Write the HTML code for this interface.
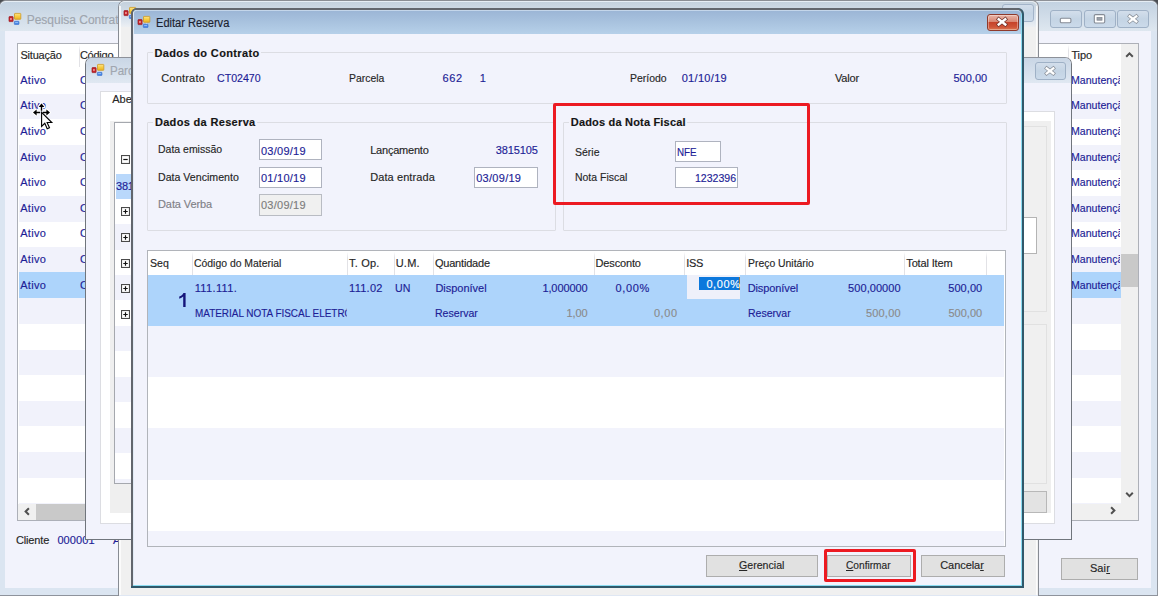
<!DOCTYPE html>
<html>
<head>
<meta charset="utf-8">
<title>Editar Reserva</title>
<style>
html,body{margin:0;padding:0;}
body{width:1158px;height:596px;overflow:hidden;position:relative;background:#4a4d52;font-family:"Liberation Sans",sans-serif;font-size:11px;}
.L{position:absolute;left:0;top:0;width:1158px;height:596px;overflow:hidden;}
.L div,.L svg,.L span{position:absolute;box-sizing:border-box;}
.t{white-space:nowrap;font-family:"Liberation Sans",sans-serif;-webkit-text-stroke:0.15px currentColor;}
.t u{position:static;text-decoration:underline;text-underline-offset:1px;}
.btn{background:#e1e1e1;border:1px solid #adadad;}
.inp{background:#fff;border:1px solid #afb3bf;}
.gb{border:1px solid #dcdde3;border-radius:1px;}
.sep{width:1px;background:linear-gradient(#fff,#e2e2e6 25%,#e2e2e6 100%);}
</style>
</head>
<body>

<!-- ======================= BACK WINDOW : Pesquisa Contrato ======================= -->
<div class="L" id="w-back">
  <div style="left:-1px;top:0;width:1159px;height:597px;background:#dbe5f1;border:1px solid #92979f;border-top:1.4px solid #8e9197;border-radius:7px 7px 0 0;"></div>
  <div style="left:0;top:1.4px;width:1157px;height:29.6px;background:linear-gradient(#c3d2e1,#dee7f0);border-radius:6px 6px 0 0;border-top:1px solid #e6edf4;"></div>
  <div style="left:5px;top:31px;width:1146px;height:557px;background:#f2f3fc;"></div>
  <div style="left:0;top:594.8px;width:1158px;height:1.2px;background:#8e939c;"></div>
  <svg style="left:8px;top:12px" width="16" height="16" viewBox="0 0 16 16"><use href="#appicon"/></svg>
  <!-- caption buttons -->
  <div style="left:1050px;top:10px;width:32px;height:18px;border:1px solid #9fb1c6;border-radius:3px;background:linear-gradient(#d3deeb,#c4d4e4 50%,#cbdaea);"></div>
  <div style="left:1084px;top:10px;width:32px;height:18px;border:1px solid #9fb1c6;border-radius:3px;background:linear-gradient(#d3deeb,#c4d4e4 50%,#cbdaea);"></div>
  <div style="left:1117px;top:10px;width:32px;height:18px;border:1px solid #9fb1c6;border-radius:3px;background:linear-gradient(#d3deeb,#c4d4e4 50%,#cbdaea);"></div>
  <svg style="left:1058px;top:16px" width="16" height="9" viewBox="0 0 16 9"><rect x="2.3" y="2.2" width="10.6" height="4.6" rx="1.2" fill="#fff" stroke="#858b95" stroke-width="1.1"/></svg>
  <svg style="left:1092px;top:13px" width="16" height="12" viewBox="0 0 16 12"><rect x="2.3" y="1.6" width="10.4" height="8.4" rx="1.2" fill="#fff" stroke="#858b95" stroke-width="1.1"/><rect x="5" y="4.4" width="5" height="2.8" fill="#9aa0a8" stroke="#858b95" stroke-width=".8"/></svg>
  <svg style="left:1125px;top:13px" width="16" height="12" viewBox="0 0 16 12"><use href="#xglyph"/></svg>

  <!-- grid -->
  <div style="left:17px;top:43px;width:1122px;height:478px;background:#fff;border:1px solid #adb0b8;"></div>
  <div style="left:19px;top:67.5px;width:1102px;height:436px;background:repeating-linear-gradient(to bottom,#fff 0,#fff 25.6px,#f1f2fb 25.6px,#f1f2fb 51.2px);"></div>
  <div style="left:19px;top:272.4px;width:1102px;height:25.6px;background:#add4fb;"></div>
  <div class="sep" style="left:78.5px;top:45px;height:22px;"></div>
  <div class="sep" style="left:1068px;top:45px;height:22px;"></div>
  <!-- v scrollbar -->
  <div style="left:1121px;top:44px;width:17px;height:460px;background:#f0f0f0;"></div>
  <div style="left:1121px;top:253.5px;width:17px;height:33px;background:#c9c9c9;"></div>
  <svg style="left:1124px;top:51.2px" width="11" height="8" viewBox="0 0 11 8"><path d="M2.2 5.7 L5.5 2.4 L8.8 5.7" fill="none" stroke="#505050" stroke-width="2"/></svg>
  <svg style="left:1123.6px;top:491px" width="11" height="8" viewBox="0 0 11 8"><path d="M2.2 1.8 L5.5 5.1 L8.8 1.8" fill="none" stroke="#505050" stroke-width="2"/></svg>
  <!-- h scrollbar -->
  <div style="left:18px;top:503.5px;width:1120px;height:16.5px;background:#f0f0f0;"></div>
  <div style="left:35.5px;top:503.5px;width:400px;height:16.5px;background:#c9c9c9;"></div>
  <svg style="left:23.1px;top:505.5px" width="8" height="11" viewBox="0 0 8 11"><path d="M5.9 2.2 L2.6 5.5 L5.9 8.8" fill="none" stroke="#505050" stroke-width="2"/></svg>
  <svg style="left:1108.5px;top:505.2px" width="8" height="11" viewBox="0 0 8 11"><path d="M2.1 2.2 L5.4 5.5 L2.1 8.8" fill="none" stroke="#505050" stroke-width="2"/></svg>
  <!-- Sair button -->
  <div class="btn" style="left:1061px;top:558px;width:77px;height:21.5px;"></div>
<span class="t" style="left:26.74px;top:13.84px;font-size:12px;line-height:12px;color:#9ea5ae;letter-spacing:-0.020px;">Pesquisa Contrato</span>
<span class="t" style="left:20.39px;top:50.49px;font-size:11px;line-height:11px;color:#262626;letter-spacing:-0.186px;">Situação</span>
<span class="t" style="left:79.89px;top:50.49px;font-size:11px;line-height:11px;color:#262626;letter-spacing:-0.230px;">Código</span>
<span class="t" style="left:1071.39px;top:50.49px;font-size:11px;line-height:11px;color:#262626;letter-spacing:-0.097px;">Tipo</span>
<span class="t" style="left:20.20px;top:74.71px;font-size:11px;line-height:11px;color:#1d1d96;letter-spacing:0.285px;">Ativo</span>
<span class="t" style="left:79.99px;top:74.71px;font-size:11px;line-height:11px;color:#1d1d96;">C</span>
<span class="t" style="left:1070.80px;top:74.71px;font-size:11px;line-height:11px;color:#1d1d96;transform:scaleX(0.9631);transform-origin:0 0;width:51.30px;height:14px;overflow:hidden;">Manutenção</span>
<span class="t" style="left:20.20px;top:100.31px;font-size:11px;line-height:11px;color:#1d1d96;letter-spacing:0.285px;">Ativo</span>
<span class="t" style="left:79.99px;top:100.31px;font-size:11px;line-height:11px;color:#1d1d96;">C</span>
<span class="t" style="left:1070.80px;top:100.31px;font-size:11px;line-height:11px;color:#1d1d96;transform:scaleX(0.9631);transform-origin:0 0;width:51.30px;height:14px;overflow:hidden;">Manutenção</span>
<span class="t" style="left:20.20px;top:125.91px;font-size:11px;line-height:11px;color:#1d1d96;letter-spacing:0.285px;">Ativo</span>
<span class="t" style="left:79.99px;top:125.91px;font-size:11px;line-height:11px;color:#1d1d96;">C</span>
<span class="t" style="left:1070.80px;top:125.91px;font-size:11px;line-height:11px;color:#1d1d96;transform:scaleX(0.9631);transform-origin:0 0;width:51.30px;height:14px;overflow:hidden;">Manutenção</span>
<span class="t" style="left:20.20px;top:151.51px;font-size:11px;line-height:11px;color:#1d1d96;letter-spacing:0.285px;">Ativo</span>
<span class="t" style="left:79.99px;top:151.51px;font-size:11px;line-height:11px;color:#1d1d96;">C</span>
<span class="t" style="left:1070.80px;top:151.51px;font-size:11px;line-height:11px;color:#1d1d96;transform:scaleX(0.9631);transform-origin:0 0;width:51.30px;height:14px;overflow:hidden;">Manutenção</span>
<span class="t" style="left:20.20px;top:177.11px;font-size:11px;line-height:11px;color:#1d1d96;letter-spacing:0.285px;">Ativo</span>
<span class="t" style="left:79.99px;top:177.11px;font-size:11px;line-height:11px;color:#1d1d96;">C</span>
<span class="t" style="left:1070.80px;top:177.11px;font-size:11px;line-height:11px;color:#1d1d96;transform:scaleX(0.9631);transform-origin:0 0;width:51.30px;height:14px;overflow:hidden;">Manutenção</span>
<span class="t" style="left:20.20px;top:202.71px;font-size:11px;line-height:11px;color:#1d1d96;letter-spacing:0.285px;">Ativo</span>
<span class="t" style="left:79.99px;top:202.71px;font-size:11px;line-height:11px;color:#1d1d96;">C</span>
<span class="t" style="left:1070.80px;top:202.71px;font-size:11px;line-height:11px;color:#1d1d96;transform:scaleX(0.9631);transform-origin:0 0;width:51.30px;height:14px;overflow:hidden;">Manutenção</span>
<span class="t" style="left:20.20px;top:228.31px;font-size:11px;line-height:11px;color:#1d1d96;letter-spacing:0.285px;">Ativo</span>
<span class="t" style="left:79.99px;top:228.31px;font-size:11px;line-height:11px;color:#1d1d96;">C</span>
<span class="t" style="left:1070.80px;top:228.31px;font-size:11px;line-height:11px;color:#1d1d96;transform:scaleX(0.9631);transform-origin:0 0;width:51.30px;height:14px;overflow:hidden;">Manutenção</span>
<span class="t" style="left:20.20px;top:253.91px;font-size:11px;line-height:11px;color:#1d1d96;letter-spacing:0.285px;">Ativo</span>
<span class="t" style="left:79.99px;top:253.91px;font-size:11px;line-height:11px;color:#1d1d96;">C</span>
<span class="t" style="left:1070.80px;top:253.91px;font-size:11px;line-height:11px;color:#1d1d96;transform:scaleX(0.9631);transform-origin:0 0;width:51.30px;height:14px;overflow:hidden;">Manutenção</span>
<span class="t" style="left:20.20px;top:279.51px;font-size:11px;line-height:11px;color:#1d1d96;letter-spacing:0.285px;">Ativo</span>
<span class="t" style="left:79.99px;top:279.51px;font-size:11px;line-height:11px;color:#1d1d96;">C</span>
<span class="t" style="left:1070.80px;top:279.51px;font-size:11px;line-height:11px;color:#1d1d96;transform:scaleX(0.9631);transform-origin:0 0;width:51.30px;height:14px;overflow:hidden;">Manutenção</span>
<span class="t" style="left:15.89px;top:534.69px;font-size:11px;line-height:11px;color:#262626;letter-spacing:-0.140px;">Cliente</span>
<span class="t" style="left:57.40px;top:534.69px;font-size:11px;line-height:11px;color:#1d1d96;letter-spacing:0.098px;">000001</span>
<span class="t" style="left:112.99px;top:534.69px;font-size:11px;line-height:11px;color:#1d1d96;">A</span>
<span class="t" style="left:1089.89px;top:563.29px;font-size:11px;line-height:11px;color:#262626;letter-spacing:0.144px;">Sai<u>r</u></span>
  <div style="left:1120.5px;top:68px;width:1px;height:435px;background:transparent;"></div>
</div>

<!-- ======================= MIDDLE WINDOW ======================= -->
<div class="L" id="w-mid">
  <div style="left:118px;top:0;width:920.6px;height:600px;background:#f0f0f0;border:1.3px solid #878b93;border-top:1.4px solid #8a8d93;border-radius:7px 7px 0 0;"></div>
  <div style="left:119.3px;top:1.4px;width:918px;height:25.6px;background:linear-gradient(#c4d1dd,#dbe4ee 70%,#eceff3);border-radius:6px 6px 0 0;border-top:1px solid #e6edf4;"></div>
  <div style="left:119.3px;top:6px;width:1.3px;height:594px;background:rgba(255,255,255,.75);"></div>
  <div style="left:1035.6px;top:6px;width:1.6px;height:594px;background:rgba(255,255,255,.8);"></div>
  <div style="left:119px;top:594.5px;width:919px;height:2px;background:#dfe7f3;"></div>
  <svg style="left:123px;top:5.8px" width="16" height="16" viewBox="0 0 16 16"><use href="#appicon"/></svg>
  <div style="left:1002px;top:3.5px;width:32px;height:18px;border:1px solid #a3b4c9;border-radius:3px;background:linear-gradient(#d3deeb,#c6d5e5 50%,#cddbea);"></div>

</div>

<!-- ======================= PARCELAS WINDOW ======================= -->
<div class="L" id="w-parc">
  <div style="left:85px;top:57px;width:986.5px;height:483px;background:#f2f3fc;border:1px solid #70757c;border-top-color:#8d9199;border-radius:7px 7px 0 0;"></div>
  <div style="left:86px;top:58px;width:984.5px;height:25px;background:linear-gradient(#c9d6e5,#e0e8f2);border-radius:6px 6px 0 0;"></div>
  <svg style="left:91.3px;top:63.2px" width="16" height="16" viewBox="0 0 16 16"><use href="#appicon"/></svg>
  <div style="left:1035px;top:62px;width:31px;height:18px;border:1px solid #9fb1c6;border-radius:3px;background:linear-gradient(#d3deeb,#c4d4e4 50%,#cbdaea);"></div>
  <svg style="left:1042.4px;top:65px" width="16" height="12" viewBox="0 0 16 12"><use href="#xglyph"/></svg>
  <!-- tab control -->
  <div style="left:100px;top:91px;width:72px;height:22px;background:#fff;border:1px solid #dcdde2;border-bottom:none;"></div>
  <div style="left:100px;top:111px;width:954.5px;height:413px;background:#fff;border:1px solid #dcdde2;"></div>
  <div style="left:101px;top:110px;width:70px;height:3px;background:#fff;"></div>
  <!-- gray panel -->
  <div style="left:110px;top:120.5px;width:941px;height:392.5px;background:#efefef;"></div>
  <div style="left:600px;top:126px;width:447px;height:186px;border:1px solid #e1e1e1;background:#f0f0f0;"></div>
  <div style="left:600px;top:324px;width:447px;height:160px;border:1px solid #e1e1e1;background:#f0f0f0;"></div>
  <div style="left:900px;top:217px;width:136.5px;height:37px;border:1px solid #b4b4b4;background:#fff;"></div>
  <div class="btn" style="left:960px;top:491px;width:87px;height:22px;background:#e3e3e3;border-color:#b8b8b8;"></div>
  <!-- left list -->
  <div style="left:114px;top:122px;width:400px;height:361.5px;background:#fff;border:1px solid #a5a8ae;"></div>
  <div style="left:115px;top:147.5px;width:398px;height:335px;background:repeating-linear-gradient(to bottom,#fff 0,#fff 25.5px,#fff 25.5px,#fff 76.5px,#f1f2fb 76.5px,#f1f2fb 102px,#fff 102px,#fff 127.5px);"></div>
  <div style="left:115px;top:224px;width:398px;height:259px;background:repeating-linear-gradient(to bottom,#f1f2fb 0,#f1f2fb 25.5px,#fff 25.5px,#fff 51px);"></div>
  <div style="left:116px;top:173.6px;width:397px;height:25px;background:#b9d8fb;"></div>
  <svg style="left:121px;top:155px" width="9" height="9" viewBox="0 0 9 9"><rect x=".5" y=".5" width="8" height="8" fill="#fff" stroke="#4a4a4a" stroke-width="1.15"/><path d="M2.3 4.5h4.4" stroke="#111" stroke-width="1.2"/></svg>
  <svg style="left:121px;top:206.5px" width="9" height="9" viewBox="0 0 9 9"><use href="#plusbox"/></svg>
  <svg style="left:121px;top:232.5px" width="9" height="9" viewBox="0 0 9 9"><use href="#plusbox"/></svg>
  <svg style="left:121px;top:258.5px" width="9" height="9" viewBox="0 0 9 9"><use href="#plusbox"/></svg>
  <svg style="left:121px;top:284.2px" width="9" height="9" viewBox="0 0 9 9"><use href="#plusbox"/></svg>
  <svg style="left:121px;top:310.2px" width="9" height="9" viewBox="0 0 9 9"><use href="#plusbox"/></svg>
<span class="t" style="left:110.24px;top:65.24px;font-size:12px;line-height:12px;color:#a0a6af;transform:scaleX(0.9621);transform-origin:0 0;">Parcelas</span>
<span class="t" style="left:112.19px;top:94.49px;font-size:11px;line-height:11px;color:#262626;letter-spacing:0.081px;">Abertas</span>
<span class="t" style="left:116.09px;top:180.89px;font-size:11px;line-height:11px;color:#1d1d96;letter-spacing:-0.275px;">381</span>
</div>

<!-- ======================= FRONT WINDOW : Editar Reserva ======================= -->
<div class="L" id="w-front">
  <!-- frame -->
  <div style="left:131px;top:8px;width:893px;height:580.4px;background:#31586a;border-radius:6px 6px 0 0;"></div>
  <div style="left:131px;top:7.8px;width:891.2px;height:578.6px;background:#62666d;border-radius:6px 5px 0 0;"></div>
  <div style="left:133px;top:9.6px;width:889.2px;height:576.8px;background:#8bdcf1;border-radius:4px 5px 0 0;"></div>
  <div style="left:133px;top:9.6px;width:888px;height:575.5px;background:#f2f3fc;border-left:1.2px solid #e1eaf5;border-radius:4px 5px 0 0;"></div>
  <div style="left:134px;top:10px;width:887px;height:24px;background:linear-gradient(#9cb6d6,#a9c3df 50%,#b6d0e9);border-radius:3px 4px 0 0;border-top:1px solid #c4d6ea;"></div>
  <svg style="left:137.4px;top:15.3px" width="16" height="16" viewBox="0 0 16 16"><use href="#appicon"/></svg>
  <!-- red close -->
  <div style="left:987px;top:13.5px;width:32px;height:17.5px;border:1px solid #8f3a2c;border-radius:3px;background:linear-gradient(#e8b5a8 0,#d98672 45%,#c6432a 50%,#cf5438 80%,#dc7a52 100%);box-shadow:inset 0 0 0 1px rgba(255,255,255,.35);"></div>
  <svg style="left:994.3px;top:15.6px" width="16" height="12" viewBox="0 0 16 12"><path d="M4.7 3.3 L11.3 8.5 M11.3 3.3 L4.7 8.5" stroke="#70342c" stroke-width="3.9" stroke-linecap="square" fill="none"/><path d="M4.7 3.3 L11.3 8.5 M11.3 3.3 L4.7 8.5" stroke="#fff" stroke-width="2.4" stroke-linecap="square" fill="none"/></svg>

  <!-- group boxes -->
  <div class="gb" style="left:147px;top:52px;width:860px;height:51.5px;"></div>
  <div style="left:153px;top:46px;width:108px;height:14px;background:#f2f3fc;"></div>
  <div class="gb" style="left:147px;top:121.5px;width:409px;height:109px;"></div>
  <div style="left:153px;top:115px;width:104px;height:14px;background:#f2f3fc;"></div>
  <div class="gb" style="left:562.5px;top:121.5px;width:444.5px;height:109px;"></div>
  <div style="left:569px;top:115px;width:118px;height:14px;background:#f2f3fc;"></div>

  <!-- inputs -->
  <div class="inp" style="left:259px;top:139px;width:63px;height:21px;"></div>
  <div class="inp" style="left:259px;top:167px;width:63px;height:21px;"></div>
  <div class="inp" style="left:259px;top:194px;width:63px;height:22px;background:#f0f0f0;border-color:#b9bcc3;"></div>
  <div class="inp" style="left:474px;top:167px;width:64px;height:21px;"></div>
  <div class="inp" style="left:675px;top:141px;width:46px;height:21px;"></div>
  <div class="inp" style="left:675px;top:167px;width:63px;height:21px;"></div>

  <!-- red highlight rectangles -->
  <div style="left:553px;top:103px;width:256.5px;height:101.5px;border:3px solid #ec1a22;border-radius:2px;"></div>
  <div style="left:823.5px;top:549px;width:92.5px;height:32.5px;border:3px solid #ec1a22;border-radius:2px;"></div>

  <!-- grid -->
  <div style="left:146.5px;top:249.6px;width:859.7px;height:297.7px;background:#fff;border:1px solid #b1b4ba;"></div>
  <div style="left:147.5px;top:326.2px;width:856px;height:220.3px;background:repeating-linear-gradient(to bottom,#f2f3fc 0,#f2f3fc 51.2px,#fff 51.2px,#fff 102.4px);"></div>
  <div style="left:147.5px;top:275.1px;width:856px;height:51.1px;background:#add4fb;"></div>
  <div class="sep" style="left:192px;top:252px;height:23px;"></div>
  <div class="sep" style="left:346.8px;top:252px;height:23px;"></div>
  <div class="sep" style="left:393.6px;top:252px;height:23px;"></div>
  <div class="sep" style="left:433px;top:252px;height:23px;"></div>
  <div class="sep" style="left:593.6px;top:252px;height:23px;"></div>
  <div class="sep" style="left:684.4px;top:252px;height:23px;"></div>
  <div class="sep" style="left:745.4px;top:252px;height:23px;"></div>
  <div class="sep" style="left:903.8px;top:252px;height:23px;"></div>
  <div class="sep" style="left:986.4px;top:252px;height:23px;"></div>
  <!-- ISS editing cell -->
  <div style="left:686.6px;top:275px;width:53.6px;height:23.5px;background:#eef0fa;"></div>
  <div style="left:698.6px;top:277.4px;width:40.6px;height:12.4px;background:#0c78dc;"></div>
  <div style="left:739.2px;top:277.4px;width:1px;height:12.4px;background:#8a7a50;"></div>

  <!-- buttons -->
  <div class="btn" style="left:706px;top:555px;width:112px;height:21.5px;"></div>
  <div class="btn" style="left:827px;top:555px;width:84px;height:21.5px;"></div>
  <div class="btn" style="left:921px;top:555px;width:84px;height:21.5px;"></div>
  <svg style="left:176px;top:290px" width="14" height="20" viewBox="176 290 14 20"><path d="M183.45 292.9h2.15v14.1h-2.4v-10.5c-1 .95-2.35 1.7-3.95 2.2v-2.2c1.95-.75 3.35-1.95 4.2-3.6z" fill="#15157a"/></svg>
<span class="t" style="left:155.94px;top:16.84px;font-size:12px;line-height:12px;color:#1b2230;transform:scaleX(0.9237);transform-origin:0 0;">Editar Reserva</span>
<span class="t" style="left:154.40px;top:47.69px;font-size:11px;line-height:11px;color:#151515;letter-spacing:0.363px;font-weight:bold;">Dados do Contrato</span>
<span class="t" style="left:161.20px;top:73.29px;font-size:11px;line-height:11px;color:#262626;letter-spacing:0.201px;">Contrato</span>
<span class="t" style="left:217.40px;top:73.29px;font-size:11px;line-height:11px;color:#1d1d96;transform:scaleX(0.9634);transform-origin:0 0;">CT02470</span>
<span class="t" style="left:348.79px;top:73.29px;font-size:11px;line-height:11px;color:#262626;transform:scaleX(0.9494);transform-origin:0 0;">Parcela</span>
<span class="t" style="left:442.59px;top:73.29px;font-size:11px;line-height:11px;color:#1d1d96;letter-spacing:0.625px;">662</span>
<span class="t" style="left:479.69px;top:73.29px;font-size:11px;line-height:11px;color:#1d1d96;">1</span>
<span class="t" style="left:630.19px;top:73.29px;font-size:11px;line-height:11px;color:#262626;transform:scaleX(0.9501);transform-origin:0 0;">Período</span>
<span class="t" style="left:681.69px;top:73.29px;font-size:11px;line-height:11px;color:#1d1d96;letter-spacing:0.312px;">01/10/19</span>
<span class="t" style="left:835.00px;top:73.29px;font-size:11px;line-height:11px;color:#262626;letter-spacing:-0.166px;">Valor</span>
<span class="t" style="left:953.39px;top:73.29px;font-size:11px;line-height:11px;color:#1d1d96;letter-spacing:0.031px;">500,00</span>
<span class="t" style="left:154.90px;top:116.69px;font-size:11px;line-height:11px;color:#151515;letter-spacing:0.328px;font-weight:bold;">Dados da Reserva</span>
<span class="t" style="left:158.00px;top:144.49px;font-size:11px;line-height:11px;color:#262626;transform:scaleX(0.9531);transform-origin:0 0;">Data emissão</span>
<span class="t" style="left:158.00px;top:171.89px;font-size:11px;line-height:11px;color:#262626;transform:scaleX(0.9645);transform-origin:0 0;">Data Vencimento</span>
<span class="t" style="left:158.00px;top:199.49px;font-size:11px;line-height:11px;color:#808087;letter-spacing:-0.093px;">Data Verba</span>
<span class="t" style="left:261.00px;top:145.69px;font-size:11px;line-height:11px;color:#1d1d96;letter-spacing:0.255px;">03/09/19</span>
<span class="t" style="left:261.00px;top:173.29px;font-size:11px;line-height:11px;color:#1d1d96;letter-spacing:0.255px;">01/10/19</span>
<span class="t" style="left:261.00px;top:200.49px;font-size:11px;line-height:11px;color:#7d7d7d;letter-spacing:0.255px;">03/09/19</span>
<span class="t" style="left:370.19px;top:144.69px;font-size:11px;line-height:11px;color:#262626;letter-spacing:-0.215px;">Lançamento</span>
<span class="t" style="left:495.79px;top:144.69px;font-size:11px;line-height:11px;color:#1d1d96;letter-spacing:-0.120px;">3815105</span>
<span class="t" style="left:370.19px;top:171.89px;font-size:11px;line-height:11px;color:#262626;letter-spacing:0.091px;">Data entrada</span>
<span class="t" style="left:476.19px;top:173.29px;font-size:11px;line-height:11px;color:#1d1d96;letter-spacing:0.283px;">03/09/19</span>
<span class="t" style="left:570.79px;top:116.69px;font-size:11px;line-height:11px;color:#151515;letter-spacing:0.187px;font-weight:bold;">Dados da Nota Fiscal</span>
<span class="t" style="left:575.29px;top:147.09px;font-size:11px;line-height:11px;color:#262626;transform:scaleX(0.9542);transform-origin:0 0;">Série</span>
<span class="t" style="left:677.00px;top:147.19px;font-size:11px;line-height:11px;color:#1d1d96;transform:scaleX(0.8914);transform-origin:0 0;">NFE</span>
<span class="t" style="left:575.29px;top:172.09px;font-size:11px;line-height:11px;color:#262626;transform:scaleX(0.9506);transform-origin:0 0;">Nota Fiscal</span>
<span class="t" style="left:695.00px;top:173.29px;font-size:11px;line-height:11px;color:#1d1d96;transform:scaleX(0.9599);transform-origin:0 0;">1232396</span>
<span class="t" style="left:150.09px;top:257.89px;font-size:11px;line-height:11px;color:#262626;transform:scaleX(0.9608);transform-origin:0 0;">Seq</span>
<span class="t" style="left:194.20px;top:257.89px;font-size:11px;line-height:11px;color:#262626;transform:scaleX(0.9466);transform-origin:0 0;">Código do Material</span>
<span class="t" style="left:349.09px;top:257.89px;font-size:11px;line-height:11px;color:#262626;letter-spacing:0.173px;">T. Op.</span>
<span class="t" style="left:395.69px;top:257.89px;font-size:11px;line-height:11px;color:#262626;letter-spacing:0.225px;">U.M.</span>
<span class="t" style="left:434.89px;top:257.89px;font-size:11px;line-height:11px;color:#262626;letter-spacing:-0.187px;">Quantidade</span>
<span class="t" style="left:595.60px;top:257.89px;font-size:11px;line-height:11px;color:#262626;letter-spacing:-0.168px;">Desconto</span>
<span class="t" style="left:686.19px;top:257.89px;font-size:11px;line-height:11px;color:#262626;letter-spacing:-0.262px;">ISS</span>
<span class="t" style="left:747.69px;top:257.89px;font-size:11px;line-height:11px;color:#262626;transform:scaleX(0.9456);transform-origin:0 0;">Preço Unitário</span>
<span class="t" style="left:906.29px;top:257.89px;font-size:11px;line-height:11px;color:#262626;letter-spacing:-0.153px;">Total Item</span>
<span class="t" style="left:194.70px;top:282.59px;font-size:11px;line-height:11px;color:#1d1d96;letter-spacing:0.364px;">111.111.</span>
<span class="t" style="left:349.09px;top:282.59px;font-size:11px;line-height:11px;color:#1d1d96;letter-spacing:0.259px;">111.02</span>
<span class="t" style="left:394.89px;top:282.59px;font-size:11px;line-height:11px;color:#1d1d96;transform:scaleX(0.9635);transform-origin:0 0;">UN</span>
<span class="t" style="left:435.39px;top:282.59px;font-size:11px;line-height:11px;color:#1d1d96;letter-spacing:-0.017px;">Disponível</span>
<span class="t" style="left:542.39px;top:282.59px;font-size:11px;line-height:11px;color:#1d1d96;letter-spacing:-0.097px;">1,000000</span>
<span class="t" style="left:615.39px;top:282.59px;font-size:11px;line-height:11px;color:#1d1d96;letter-spacing:0.702px;">0,00%</span>
<span class="t" style="left:706.39px;top:279.09px;font-size:11px;line-height:11px;color:#ffffff;letter-spacing:0.602px;">0,00%</span>
<span class="t" style="left:747.69px;top:282.59px;font-size:11px;line-height:11px;color:#1d1d96;letter-spacing:-0.105px;">Disponível</span>
<span class="t" style="left:848.10px;top:282.59px;font-size:11px;line-height:11px;color:#1d1d96;letter-spacing:0.064px;">500,00000</span>
<span class="t" style="left:948.19px;top:282.59px;font-size:11px;line-height:11px;color:#1d1d96;letter-spacing:0.071px;">500,00</span>
<span class="t" style="left:435.39px;top:308.39px;font-size:11px;line-height:11px;color:#1d1d96;transform:scaleX(0.9593);transform-origin:0 0;">Reservar</span>
<span class="t" style="left:566.39px;top:308.39px;font-size:11px;line-height:11px;color:#8b8b8b;letter-spacing:-0.071px;">1,00</span>
<span class="t" style="left:653.89px;top:308.39px;font-size:11px;line-height:11px;color:#8b8b8b;letter-spacing:0.596px;">0,00</span>
<span class="t" style="left:747.69px;top:308.39px;font-size:11px;line-height:11px;color:#1d1d96;transform:scaleX(0.9571);transform-origin:0 0;">Reservar</span>
<span class="t" style="left:865.89px;top:308.39px;font-size:11px;line-height:11px;color:#8b8b8b;letter-spacing:0.211px;">500,00</span>
<span class="t" style="left:948.39px;top:308.39px;font-size:11px;line-height:11px;color:#8b8b8b;letter-spacing:0.031px;">500,00</span>
<span class="t" style="left:739.39px;top:560.29px;font-size:11px;line-height:11px;color:#262626;transform:scaleX(0.9642);transform-origin:0 0;"><u>G</u>erencial</span>
<span class="t" style="left:845.60px;top:560.29px;font-size:11px;line-height:11px;color:#262626;transform:scaleX(0.9237);transform-origin:0 0;"><u>C</u>onfirmar</span>
<span class="t" style="left:940.19px;top:560.29px;font-size:11px;line-height:11px;color:#262626;letter-spacing:-0.060px;">Cancela<u>r</u></span>
<span class="t" style="left:194.60px;top:308.39px;font-size:11px;line-height:11px;height:13px;color:#1d1d96;transform:scaleX(0.9031);transform-origin:0 0;width:168.0px;overflow:hidden;">MATERIAL NOTA FISCAL ELETRÔNICA</span>
</div>

<!-- mouse cursor -->
<svg style="position:absolute;left:30px;top:100px" width="26" height="30" viewBox="0 0 26 30">
  <g fill="#fff" stroke="#fff" stroke-width="2.2" stroke-linejoin="round">
    <path d="M11.5 3.4 L14.4 7 H8.6 Z"/>
    <path d="M3 12.5 L6.6 9.6 V15.4 Z"/>
    <path d="M20 12.5 L16.4 9.6 V15.4 Z"/>
    <path d="M11.5 6v5M5 12.5h5M13 12.5h5" stroke-width="3.6" fill="none"/>
  </g>
  <g fill="#000">
    <path d="M11.5 3.4 L14.4 7 H8.6 Z"/>
    <path d="M3 12.5 L6.6 9.6 V15.4 Z"/>
    <path d="M20 12.5 L16.4 9.6 V15.4 Z"/>
  </g>
  <g fill="none" stroke="#000" stroke-width="1.4">
    <path d="M11.5 6v4.8M5.6 12.5h4.6M12.8 12.5h4.6"/>
  </g>
  <path d="M11.6 12.4 V26.4 L14.8 23.3 L17.2 28.8 L19.5 27.8 L17.1 22.5 H21.8 Z" fill="#fff" stroke="#000" stroke-width="1.1" stroke-linejoin="miter"/>
</svg>

<!-- symbol defs -->
<svg width="0" height="0" style="position:absolute">
  <defs>
    <g id="appicon">
      <path d="M3 7.3H9.6M9.6 4.3V11" stroke="#d5dbe5" stroke-width="1" fill="none"/>
      <rect x="1" y="4.6" width="4.1" height="5" rx=".5" fill="#c7262c" stroke="#98181e" stroke-width=".7"/>
      <rect x="2.2" y="5.9" width="1.5" height="2" rx=".3" fill="#f4a3a3"/>
      <linearGradient id="yg" x1="0" y1="0" x2="0" y2="1"><stop offset="0" stop-color="#fde38c"/><stop offset=".45" stop-color="#f8cf45"/><stop offset="1" stop-color="#eab223"/></linearGradient>
      <rect x="6.5" y="1.4" width="6.3" height="5.9" rx=".5" fill="url(#yg)" stroke="#cf9b25" stroke-width=".8"/>
      <rect x="6.3" y="9.3" width="4.7" height="3.2" rx=".6" fill="#4a88e6" stroke="#3a6fcb" stroke-width=".6"/>
      <rect x="7.1" y="9.9" width="3.1" height="1" rx=".3" fill="#8ebaf6"/>
    </g>
    <g id="xglyph">
      <path d="M4.7 3.3 L11.3 8.5 M11.3 3.3 L4.7 8.5" stroke="#8a9099" stroke-width="3.7" stroke-linecap="square" fill="none"/>
      <path d="M4.7 3.3 L11.3 8.5 M11.3 3.3 L4.7 8.5" stroke="#fff" stroke-width="2.3" stroke-linecap="square" fill="none"/>
    </g>
    <g id="plusbox">
      <rect x=".5" y=".5" width="8" height="8" fill="#fff" stroke="#4a4a4a" stroke-width="1.15"/>
      <path d="M2.3 4.5h4.4M4.5 2.3v4.4" stroke="#111" stroke-width="1.2"/>
    </g>
  </defs>
</svg>
</body>
</html>
